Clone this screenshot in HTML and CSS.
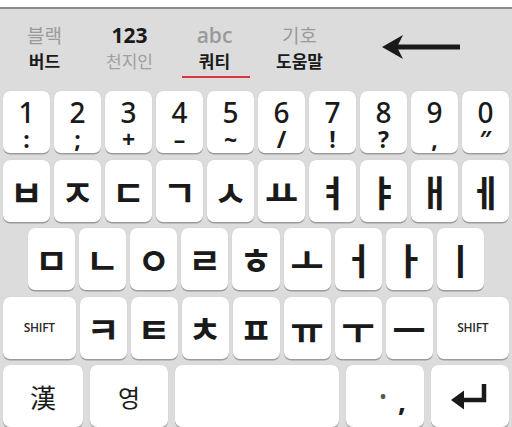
FILE: index.html
```html
<!doctype html>
<html lang="ko">
	<head>
		<meta charset="utf-8">
		<title>키보드</title>
		<link rel="stylesheet" href="styles.css">
	</head>
	<body>
		<div class="topbar"></div>
		<div class="tabs">
			<div class="tab"><span class="up">블랙</span><span class="down on">버드</span></div>
			<div class="tab"><span class="up on num">123</span><span class="down">천지인</span></div>
			<div class="tab sel"><span class="up num">abc</span><span class="down on">쿼티</span></div>
			<div class="tab"><span class="up">기호</span><span class="down on">도움말</span></div>
			<div class="back">
				<svg width="80" height="28" viewBox="0 0 80 28">
					<path d="M10 14 H79" stroke="#1a1a1a" stroke-width="5"/>
					<path d="M1 14 L22 2 L16 14 L22 26 Z" fill="#1a1a1a"/>
				</svg>
			</div>
		</div>

		<div class="keys">
			<div class="row">
				<div class="key dual"><b>1</b><i>:</i></div>
				<div class="key dual"><b>2</b><i>;</i></div>
				<div class="key dual"><b>3</b><i>+</i></div>
				<div class="key dual"><b>4</b><i>–</i></div>
				<div class="key dual"><b>5</b><i>~</i></div>
				<div class="key dual"><b>6</b><i>/</i></div>
				<div class="key dual"><b>7</b><i>!</i></div>
				<div class="key dual"><b>8</b><i>?</i></div>
				<div class="key dual"><b>9</b><i>,</i></div>
				<div class="key dual"><b>0</b><i>″</i></div>
			</div>
			<div class="row">
				<div class="key">ㅂ</div>
				<div class="key">ㅈ</div>
				<div class="key">ㄷ</div>
				<div class="key">ㄱ</div>
				<div class="key">ㅅ</div>
				<div class="key">ㅛ</div>
				<div class="key">ㅕ</div>
				<div class="key">ㅑ</div>
				<div class="key">ㅐ</div>
				<div class="key">ㅔ</div>
			</div>
			<div class="row inset">
				<div class="key">ㅁ</div>
				<div class="key">ㄴ</div>
				<div class="key">ㅇ</div>
				<div class="key">ㄹ</div>
				<div class="key">ㅎ</div>
				<div class="key">ㅗ</div>
				<div class="key">ㅓ</div>
				<div class="key">ㅏ</div>
				<div class="key">ㅣ</div>
			</div>
			<div class="row">
				<div class="key shift">SHIFT</div>
				<div class="key">ㅋ</div>
				<div class="key">ㅌ</div>
				<div class="key">ㅊ</div>
				<div class="key">ㅍ</div>
				<div class="key">ㅠ</div>
				<div class="key">ㅜ</div>
				<div class="key">ㅡ</div>
				<div class="key shift">SHIFT</div>
			</div>
			<div class="row bottom">
				<div class="key hanja">漢</div>
				<div class="key lang">영</div>
				<div class="key space"></div>
				<div class="key lang punct"><span class="dot">•</span><span class="comma">,</span></div>
				<div class="key lang">
					<svg width="40" height="28" viewBox="0 0 40 28">
						<path d="M34 2 V18 H12" fill="none" stroke="#1a1a1a" stroke-width="4.5"/>
						<path d="M1 18 L14 8.5 V27.5 Z" fill="#1a1a1a"/>
					</svg>
				</div>
			</div>
		</div>
	</body>
</html>
```

FILE: styles.css
```css
html, body { margin: 0; padding: 0; }
body {
	width: 512px;
	height: 427px;
	overflow: hidden;
	background: #dcdcdc;
	font-family: "Noto Sans CJK KR", "Noto Sans", sans-serif;
	color: #1a1a1a;
}

.topbar {
	height: 7px;
	background: #fff;
	border-bottom: 2px solid #8c8c8c;
}

/* mode tabs */
.tabs {
	display: flex;
	height: 78px;
	padding-left: 2px;
}
.tab {
	width: 85px;
	display: flex;
	flex-direction: column;
	align-items: center;
	padding-top: 14px;
	box-sizing: border-box;
	position: relative;
}
.tab .up { font-size: 19px; line-height: 24px; color: #9a9a9a; }
.tab .up.num { font-family: "Open Sans", sans-serif; font-size: 21px; font-weight: 600; line-height: 24px; }
.tab .down { font-size: 17px; line-height: 25px; color: #a0a0a0; margin-top: 1px; }
.tab .on { color: #1a1a1a; font-weight: 700; }
.tab .up.num.on { color: #1a1a1a; font-weight: 700; }
.tab.sel::after {
	content: "";
	position: absolute;
	left: 10px;
	right: 7px;
	top: 67px;
	height: 2px;
	background: #d8383f;
}
.back {
	flex: 1;
	display: flex;
	align-items: center;
	padding: 0 0 2px 39px;
}

/* keyboard */
.keys {
	display: flex;
	flex-direction: column;
	gap: 6.5px;
	padding: 4px 3px 0;
}
.row {
	display: flex;
	gap: 4px;
	height: 62px;
}
.row.inset { padding: 0 25px; }
.row.bottom { gap: 7px; }

.key {
	flex: 1;
	background: #fff;
	border-radius: 7px;
	box-shadow: 0 1.5px 0 #9c9c9c, 0 0 1px #b8b8b8;
	display: flex;
	align-items: center;
	justify-content: center;
	font-size: 36px;
	font-weight: 700;
	color: #1a1a1a;
	box-sizing: border-box;
	min-width: 0;
}
.key.dual {
	flex-direction: column;
	justify-content: flex-start;
	padding-top: 7px;
}
.key.dual b {
	font-family: "Noto Sans", sans-serif;
	font-weight: 500;
	font-size: 28px;
	line-height: 1;
}
.key.dual i {
	font-style: normal;
	font-family: "Noto Sans", sans-serif;
	font-weight: 700;
	font-size: 23px;
	line-height: 1;
	margin-top: 2px;
}

.key.shift {
	flex: 0 0 72.5px;
	font-family: "Open Sans", sans-serif;
	font-size: 12px;
	font-weight: 600;
	letter-spacing: -0.3px;
	color: #2a2a2a;
}

.key.hanja { flex: 0 0 80px; font-weight: 400; font-size: 26px; }
.key.lang { flex: 0 0 78px; font-weight: 400; font-size: 24px; }
.key.space { flex: 1; }
.key.punct { font-family: "Open Sans", sans-serif; font-weight: 700; font-size: 28px; gap: 12px; padding: 0 0 0 16px; }
.key.punct .dot { color: #555; font-size: 16px; }
.key.punct .comma { position: relative; top: 4px; }
```
